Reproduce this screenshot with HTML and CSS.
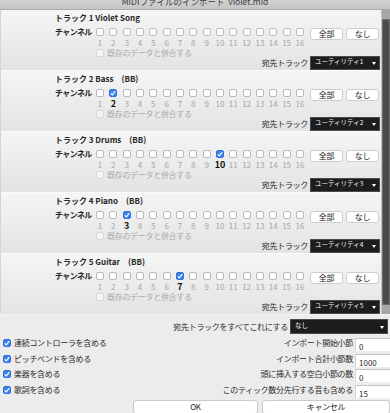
FILE: index.html
```html
<!DOCTYPE html>
<html lang="ja">
  <head>
    <meta charset="utf-8" />
    <title>MIDIファイルのインポート</title>
    <link rel="stylesheet" href="styles.css">
  </head>
  <body>
    <div class="titlebar"><span>MIDIファイルのインポート&nbsp;&nbsp;violet.mid</span></div>

    <div class="scroller">
      <div class="tracks">
        <section class="track">
          <div class="track-title">トラック 1 Violet Song</div>
          <div class="ch-label">チャンネル</div>
          <div class="channels">
            <span class="ch"><i class="box"></i>1</span><span class="ch"><i class="box"></i>2</span><span class="ch"><i class="box"></i>3</span><span class="ch"><i class="box"></i>4</span>
            <span class="ch"><i class="box"></i>5</span><span class="ch"><i class="box"></i>6</span><span class="ch"><i class="box"></i>7</span><span class="ch"><i class="box"></i>8</span>
            <span class="ch"><i class="box"></i>9</span><span class="ch"><i class="box"></i>10</span><span class="ch"><i class="box"></i>11</span><span class="ch"><i class="box"></i>12</span>
            <span class="ch"><i class="box"></i>13</span><span class="ch"><i class="box"></i>14</span><span class="ch"><i class="box"></i>15</span><span class="ch"><i class="box"></i>16</span>
          </div>
          <div class="ch-buttons"><button class="small">全部</button><button class="small">なし</button></div>
          <div class="merge"><i class="box off"></i><span class="merge-text">既存のデータと併合する</span></div>
          <div class="dest">宛先トラック<span class="select">ユーティリティ1<i class="arrow"></i></span></div>
        </section>

        <section class="track">
          <div class="track-title">トラック 2 Bass<span class="bb">(BB)</span></div>
          <div class="ch-label">チャンネル</div>
          <div class="channels">
            <span class="ch"><i class="box"></i>1</span><span class="ch on"><i class="box on"><svg viewBox="0 0 8 8"><path d="M1.8 4.3 3.3 5.8 6.3 2.2" /></svg></i>2</span><span class="ch"><i class="box"></i>3</span><span class="ch"><i class="box"></i>4</span>
            <span class="ch"><i class="box"></i>5</span><span class="ch"><i class="box"></i>6</span><span class="ch"><i class="box"></i>7</span><span class="ch"><i class="box"></i>8</span>
            <span class="ch"><i class="box"></i>9</span><span class="ch"><i class="box"></i>10</span><span class="ch"><i class="box"></i>11</span><span class="ch"><i class="box"></i>12</span>
            <span class="ch"><i class="box"></i>13</span><span class="ch"><i class="box"></i>14</span><span class="ch"><i class="box"></i>15</span><span class="ch"><i class="box"></i>16</span>
          </div>
          <div class="ch-buttons"><button class="small">全部</button><button class="small">なし</button></div>
          <div class="merge"><i class="box off"></i><span class="merge-text">既存のデータと併合する</span></div>
          <div class="dest">宛先トラック<span class="select">ユーティリティ2<i class="arrow"></i></span></div>
        </section>

        <section class="track">
          <div class="track-title">トラック 3 Drums<span class="bb">(BB)</span></div>
          <div class="ch-label">チャンネル</div>
          <div class="channels">
            <span class="ch"><i class="box"></i>1</span><span class="ch"><i class="box"></i>2</span><span class="ch"><i class="box"></i>3</span><span class="ch"><i class="box"></i>4</span>
            <span class="ch"><i class="box"></i>5</span><span class="ch"><i class="box"></i>6</span><span class="ch"><i class="box"></i>7</span><span class="ch"><i class="box"></i>8</span>
            <span class="ch"><i class="box"></i>9</span><span class="ch on"><i class="box on"><svg viewBox="0 0 8 8"><path d="M1.8 4.3 3.3 5.8 6.3 2.2" /></svg></i>10</span><span class="ch"><i class="box"></i>11</span><span class="ch"><i class="box"></i>12</span>
            <span class="ch"><i class="box"></i>13</span><span class="ch"><i class="box"></i>14</span><span class="ch"><i class="box"></i>15</span><span class="ch"><i class="box"></i>16</span>
          </div>
          <div class="ch-buttons"><button class="small">全部</button><button class="small">なし</button></div>
          <div class="merge"><i class="box off"></i><span class="merge-text">既存のデータと併合する</span></div>
          <div class="dest">宛先トラック<span class="select">ユーティリティ3<i class="arrow"></i></span></div>
        </section>

        <section class="track">
          <div class="track-title">トラック 4 Piano<span class="bb">(BB)</span></div>
          <div class="ch-label">チャンネル</div>
          <div class="channels">
            <span class="ch"><i class="box"></i>1</span><span class="ch"><i class="box"></i>2</span><span class="ch on"><i class="box on"><svg viewBox="0 0 8 8"><path d="M1.8 4.3 3.3 5.8 6.3 2.2" /></svg></i>3</span><span class="ch"><i class="box"></i>4</span>
            <span class="ch"><i class="box"></i>5</span><span class="ch"><i class="box"></i>6</span><span class="ch"><i class="box"></i>7</span><span class="ch"><i class="box"></i>8</span>
            <span class="ch"><i class="box"></i>9</span><span class="ch"><i class="box"></i>10</span><span class="ch"><i class="box"></i>11</span><span class="ch"><i class="box"></i>12</span>
            <span class="ch"><i class="box"></i>13</span><span class="ch"><i class="box"></i>14</span><span class="ch"><i class="box"></i>15</span><span class="ch"><i class="box"></i>16</span>
          </div>
          <div class="ch-buttons"><button class="small">全部</button><button class="small">なし</button></div>
          <div class="merge"><i class="box off"></i><span class="merge-text">既存のデータと併合する</span></div>
          <div class="dest">宛先トラック<span class="select">ユーティリティ4<i class="arrow"></i></span></div>
        </section>

        <section class="track">
          <div class="track-title">トラック 5 Guitar<span class="bb">(BB)</span></div>
          <div class="ch-label">チャンネル</div>
          <div class="channels">
            <span class="ch"><i class="box"></i>1</span><span class="ch"><i class="box"></i>2</span><span class="ch"><i class="box"></i>3</span><span class="ch"><i class="box"></i>4</span>
            <span class="ch"><i class="box"></i>5</span><span class="ch"><i class="box"></i>6</span><span class="ch on"><i class="box on"><svg viewBox="0 0 8 8"><path d="M1.8 4.3 3.3 5.8 6.3 2.2" /></svg></i>7</span><span class="ch"><i class="box"></i>8</span>
            <span class="ch"><i class="box"></i>9</span><span class="ch"><i class="box"></i>10</span><span class="ch"><i class="box"></i>11</span><span class="ch"><i class="box"></i>12</span>
            <span class="ch"><i class="box"></i>13</span><span class="ch"><i class="box"></i>14</span><span class="ch"><i class="box"></i>15</span><span class="ch"><i class="box"></i>16</span>
          </div>
          <div class="ch-buttons"><button class="small">全部</button><button class="small">なし</button></div>
          <div class="merge"><i class="box off"></i><span class="merge-text">既存のデータと併合する</span></div>
          <div class="dest">宛先トラック<span class="select">ユーティリティ5<i class="arrow"></i></span></div>
        </section>
      </div>
      <div class="scrollbar"><span class="cap"></span><span class="thumb"></span><span class="cap"></span></div>
    </div>

    <div class="options">
      <div class="dest-all">宛先トラックをすべてこれにする<span class="select wide">なし<i class="arrow"></i></span></div>
      <div class="settings">
        <div class="opt"><i class="box on"><svg viewBox="0 0 8 8"><path d="M1.8 4.3 3.3 5.8 6.3 2.2" /></svg></i>連続コントローラを含める</div>
        <span class="field-label">インポート開始小節</span>
        <span class="field">0</span>

        <div class="opt"><i class="box on"><svg viewBox="0 0 8 8"><path d="M1.8 4.3 3.3 5.8 6.3 2.2" /></svg></i>ピッチベンドを含める</div>
        <span class="field-label">インポート合計小節数</span>
        <span class="field">1000</span>

        <div class="opt"><i class="box on"><svg viewBox="0 0 8 8"><path d="M1.8 4.3 3.3 5.8 6.3 2.2" /></svg></i>楽器を含める</div>
        <span class="field-label">頭に挿入する空白小節の数</span>
        <span class="field">0</span>

        <div class="opt"><i class="box on"><svg viewBox="0 0 8 8"><path d="M1.8 4.3 3.3 5.8 6.3 2.2" /></svg></i>歌詞を含める</div>
        <span class="field-label">このティック数分先行する音も含める</span>
        <span class="field">15</span>
      </div>
      <div class="actions">
        <button class="push">OK</button>
        <button class="push">キャンセル</button>
      </div>
    </div>
  </body>
</html>
```

FILE: styles.css
```css
html,
body {
  margin: 0;
  padding: 0;
}
body {
  width: 390px;
  height: 413px;
  overflow: hidden;
  font: 400 8px/1.25 "Noto Sans CJK JP", sans-serif;
  letter-spacing: -0.3px;
  color: #2b2b2b;
  background-color: #ececec;
}
button {
  font: inherit;
  letter-spacing: inherit;
  color: #222;
  padding: 0;
}

/* window title, mostly hidden above the edge */
.titlebar {
  height: 9px;
  overflow: hidden;
  text-align: center;
  font-size: 8.5px;
  letter-spacing: 0;
  color: #3c3c3c;
  background: linear-gradient(#d2d2d2, #c6c6c6);
  border-bottom: 1px solid #a8a8a8;
}
.titlebar span {
  display: block;
  line-height: 10px;
  margin-top: -4px;
}

/* track list */
.scroller {
  display: flex;
  height: 304px;
  overflow: hidden;
}
.tracks {
  flex: 1;
  border-left: 1px solid #d4d4d4;
}
.track {
  display: grid;
  grid-template-columns: 38.33px 213.33px 1fr;
  grid-template-rows: 14px 24px 22px;
  padding: 0 1px 0 54px;
  background: linear-gradient(#f5f5f5, #e3e3e3);
  border-top: 1px solid #fbfbfb;
}
.track:first-child {
  border-top: 0;
}
.track-title {
  grid-column: 1 / -1;
  padding-top: 2px;
  line-height: 12px;
  font-weight: 700;
  letter-spacing: 0;
  color: #262626;
}
.bb {
  margin-left: 8px;
}
.ch-label {
  margin-top: 3px;
  line-height: 10px;
  white-space: nowrap;
  font-weight: 700;
  letter-spacing: -0.6px;
  color: #262626;
}
.channels {
  display: grid;
  grid-template-columns: repeat(16, 13.333px);
}
.ch {
  display: flex;
  flex-direction: column;
  align-items: center;
  line-height: 10px;
  letter-spacing: 0;
  color: #a6a6a6;
}
.ch .box {
  margin: 4px 0 2px;
}
.ch.on {
  font-size: 9px;
  font-weight: 700;
  color: #111;
}

.box {
  display: block;
  flex: none;
  width: 8px;
  height: 8px;
  box-sizing: border-box;
  border: 1px solid #bababa;
  border-radius: 2px;
  background-color: #fff;
}
.box.on {
  border-color: #3271d8;
  background-color: #3d83ef;
}
.box.off {
  border-color: #d8d8d8;
  background-color: #f4f4f4;
}
.box svg {
  display: block;
  width: 8px;
  height: 8px;
  margin: -1px;
}
.box path {
  fill: none;
  stroke: #fff;
  stroke-width: 1.2;
}

.ch-buttons {
  display: flex;
  justify-content: flex-end;
  align-items: flex-start;
  gap: 3px;
  padding: 4px 1px 0 0;
}
.small {
  width: 33px;
  height: 12px;
  line-height: 10px;
  background-color: #fff;
  border: 1px solid #cdcdcd;
  border-radius: 3px;
}
.merge {
  grid-column: 2;
  grid-row: 3;
  display: flex;
  align-items: center;
  gap: 3px;
  height: 10px;
  padding-left: 2.67px;
}
.merge-text {
  line-height: 10px;
  white-space: nowrap;
  color: #aaaaaa;
}
.dest {
  grid-column: 2 / 4;
  grid-row: 3;
  justify-self: end;
  align-self: end;
  display: flex;
  align-items: center;
  gap: 2px;
  color: #2a2a2a;
}

/* dark pop-up menus */
.select {
  display: flex;
  justify-content: space-between;
  align-items: flex-end;
  box-sizing: border-box;
  width: 70px;
  height: 14px;
  padding: 0 3px 3px 4px;
  background-color: #1d1d1d;
  border: 1px solid #4a4a4a;
  font-size: 6.5px;
  line-height: 9px;
  letter-spacing: 0;
  color: #f2f2f2;
}
.select.wide {
  width: 98px;
  height: 15px;
}
.arrow {
  width: 0;
  height: 0;
  margin-bottom: 1px;
  border-left: 2.5px solid transparent;
  border-right: 2.5px solid transparent;
  border-top: 3px solid #fff;
}

.scrollbar {
  display: flex;
  flex-direction: column;
  width: 8px;
  border-left: 1px solid #c3c3c3;
  background-color: #6c6c6c;
}
.cap {
  height: 9px;
  background-color: #a6a6a6;
}
.thumb {
  flex: 1;
  margin: 1px;
  border-radius: 2px;
  background-color: #4b4b4b;
}

/* options below the list */
.options {
  border-top: 1px solid #f6f6f6;
}
.dest-all {
  display: flex;
  justify-content: flex-end;
  align-items: center;
  gap: 2px;
  margin-top: 4px;
  padding-right: 2px;
}
.settings {
  display: grid;
  grid-template-columns: 1fr auto 37px;
  grid-auto-rows: 15.5px;
  column-gap: 2px;
  margin: 4px -2px 0 0;
  padding-left: 3px;
}
.opt {
  display: flex;
  align-items: center;
  gap: 3px;
  height: 10px;
}
.field-label {
  line-height: 10px;
  text-align: right;
}
.field {
  box-sizing: border-box;
  height: 13px;
  padding: 3px 0 0 3px;
  line-height: 10px;
  letter-spacing: 0;
  background-color: #fff;
  border-top: 1px solid #c4c4c4;
  border-left: 1px solid #d4d4d4;
}
.actions {
  display: flex;
  gap: 4px;
  padding-left: 133px;
}
.push {
  flex: none;
  width: 125px;
  height: 14px;
  line-height: 12px;
  background-color: #fff;
  border: 1px solid #cacaca;
  border-radius: 3px;
}
.push + .push {
  width: 128px;
}
```
